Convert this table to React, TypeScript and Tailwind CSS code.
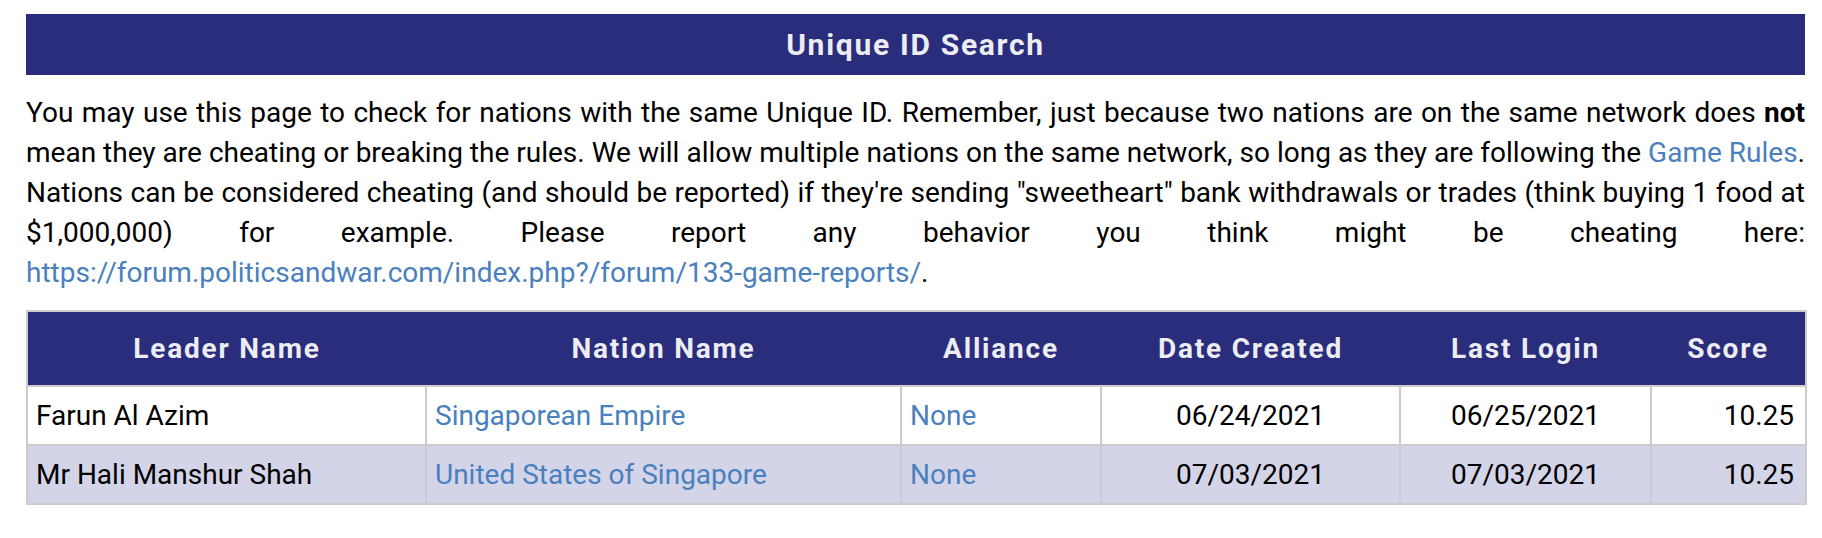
import React from "react";

const rows = [
  {
    leader: "Farun Al Azim",
    nation: "Singaporean Empire",
    alliance: "None",
    created: "06/24/2021",
    login: "06/25/2021",
    score: "10.25",
  },
  {
    leader: "Mr Hali Manshur Shah",
    nation: "United States of Singapore",
    alliance: "None",
    created: "07/03/2021",
    login: "07/03/2021",
    score: "10.25",
  },
];

const cols = ["Leader Name", "Nation Name", "Alliance", "Date Created", "Last Login", "Score"];

export default function App() {
  return (
    <div
      className="min-h-screen bg-white pl-[26px] pr-[17px] pt-[14px] text-black"
      style={{ fontFamily: "Roboto, 'Liberation Sans', sans-serif" }}
    >
      {/* Title bar */}
      <div className="flex h-[61px] items-center justify-center bg-[#292d7c]">
        <h1 className="text-[30px] font-bold tracking-[1.7px] text-[#ececf2]">Unique ID Search</h1>
      </div>

      <p className="mt-[18px] text-justify text-[28px] leading-[40px]">
        You may use this page to check for nations with the same Unique ID. Remember, just because two nations are on
        the same network does <b>not</b> mean they are cheating or breaking the rules. We will allow multiple nations on
        the same network, so long as they are following the{" "}
        <a href="#" className="text-[#4a80be]">
          Game Rules
        </a>
        . Nations can be considered cheating (and should be reported) if they're sending "sweetheart" bank withdrawals or
        trades (think buying 1 food at $1,000,000) for example. Please report any behavior you think might be cheating
        here:{" "}
        <a href="#" className="text-[#4a80be]">
          https://forum.politicsandwar.com/index.php?/forum/133-game-reports/
        </a>
        .
      </p>

      <table className="mt-[17px] w-full table-fixed border-collapse border-2 border-[#cccccc] text-[28px]">
        <colgroup>
          <col className="w-[399px]" />
          <col className="w-[475px]" />
          <col className="w-[200px]" />
          <col className="w-[299px]" />
          <col className="w-[251px]" />
          <col className="w-[155px]" />
        </colgroup>
        <thead>
          <tr className="h-[75px] bg-[#292d7c]">
            {cols.map((c) => (
              <th key={c} className="text-center font-bold tracking-[1.8px] text-[#ececf2]">
                {c}
              </th>
            ))}
          </tr>
        </thead>
        <tbody>
          {rows.map((r, i) => (
            <tr key={r.leader} className={i % 2 === 1 ? "h-[59px] bg-[#d3d4e8]" : "h-[59px] bg-white"}>
              <td className="border-2 border-[#cccccc] pl-[8px] pr-[10px]">{r.leader}</td>
              <td className="border-2 border-[#cccccc] pl-[8px] pr-[10px]">
                <a href="#" className="text-[#4a80be]">
                  {r.nation}
                </a>
              </td>
              <td className="border-2 border-[#cccccc] pl-[8px] pr-[10px]">
                <a href="#" className="text-[#4a80be]">
                  {r.alliance}
                </a>
              </td>
              <td className="border-2 border-[#cccccc] px-[10px] text-center">{r.created}</td>
              <td className="border-2 border-[#cccccc] px-[10px] text-center">{r.login}</td>
              <td className="border-2 border-[#cccccc] pl-[10px] pr-[11px] text-right">{r.score}</td>
            </tr>
          ))}
        </tbody>
      </table>
    </div>
  );
}
